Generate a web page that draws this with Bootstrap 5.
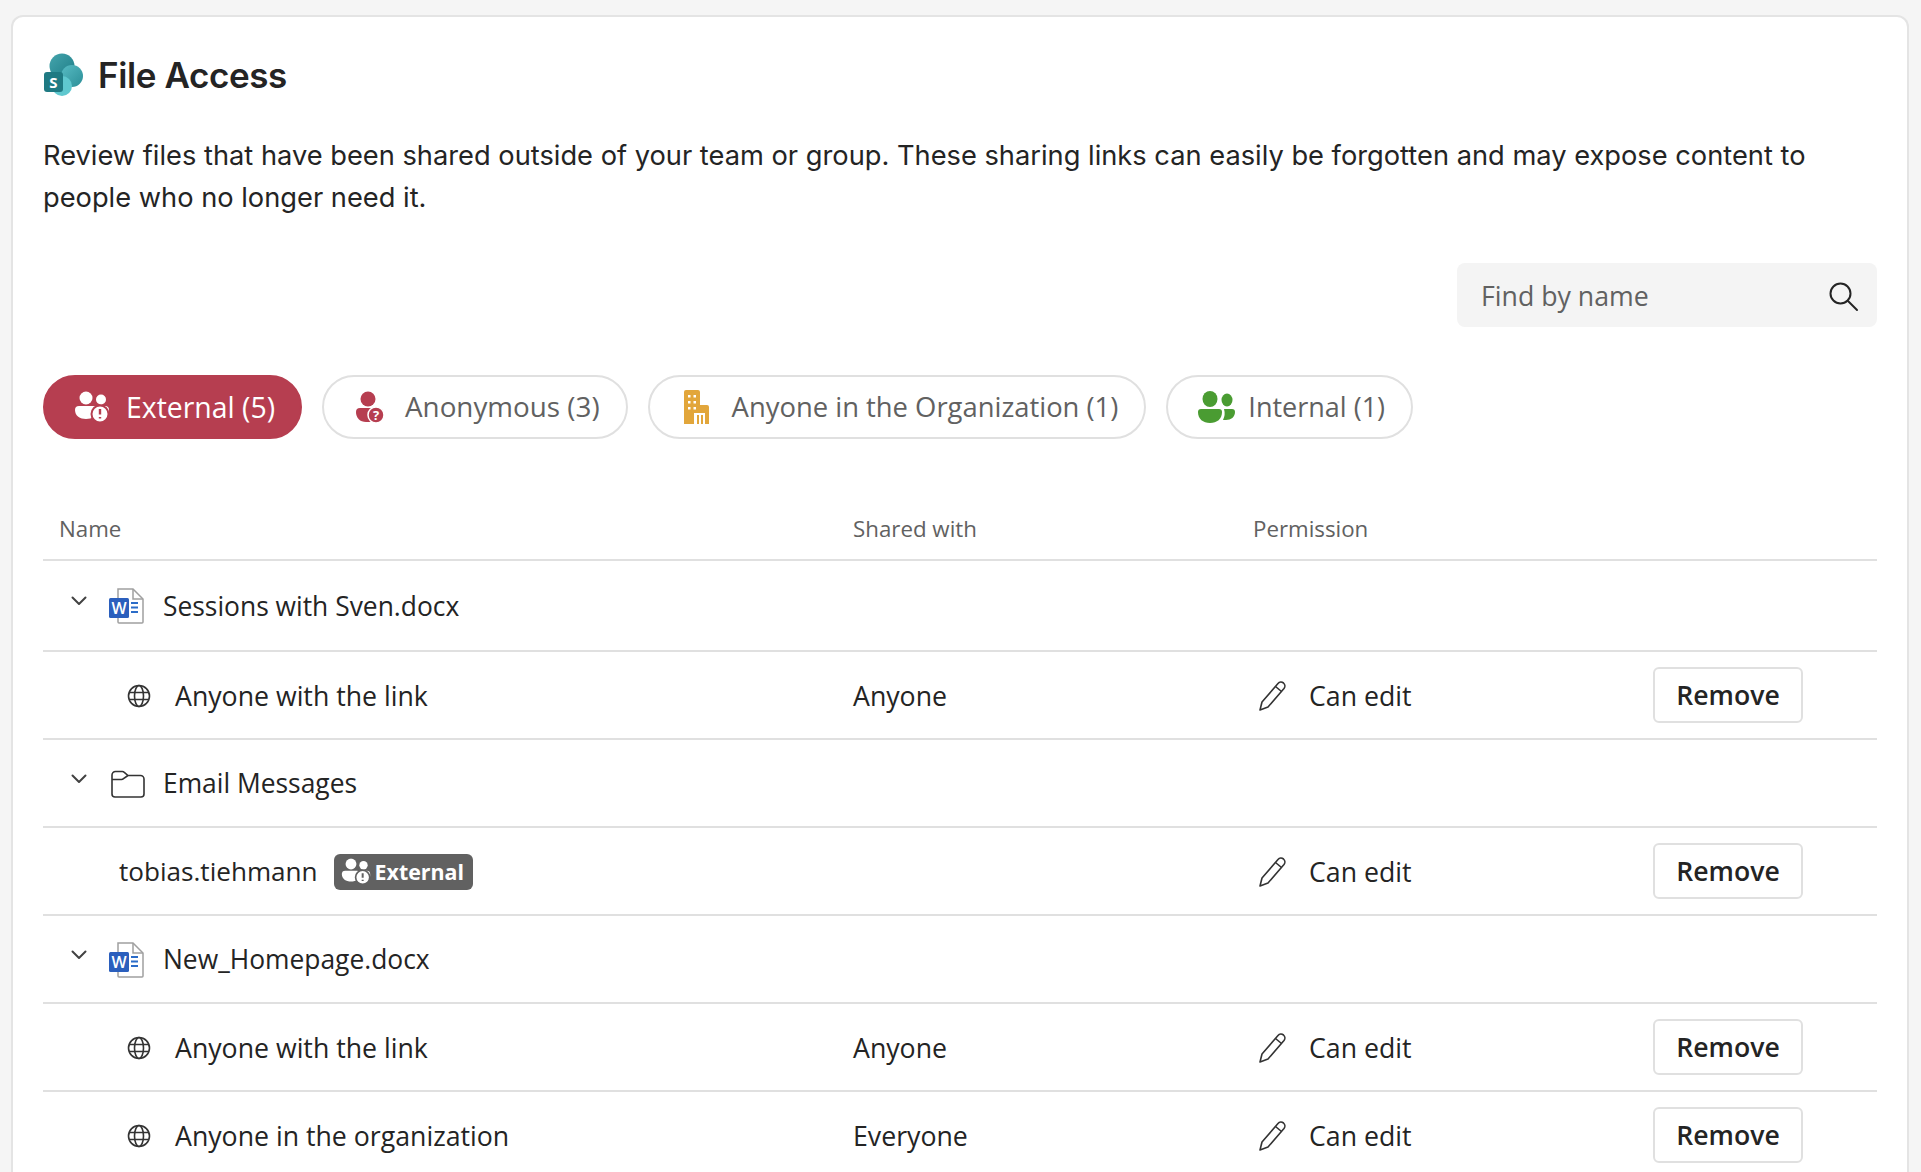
<!DOCTYPE html>
<html lang="en">
  <head>
    <meta charset="UTF-8" />
    <meta name="viewport" content="width=device-width, initial-scale=1.0" />
    <title>File Access</title>
    <link href="https://cdn.jsdelivr.net/npm/bootstrap@5.3.3/dist/css/bootstrap.min.css" rel="stylesheet" />
    <style>
      html, body { height: 100%; overflow: hidden; }
      body {
        background-color: #f5f5f5;
        color: #242424;
        font-family: "Open Sans", "Noto Sans", sans-serif;
        font-size: 26.7px;
      }
      .panel {
        margin: 17px 14px 0 13px;
        min-height: 1300px;
        padding: 36px 30px 0;
        background: #fff;
        border-radius: 10px 10px 0 0;
        box-shadow: 0 0 0 2px #e4e4e4;
      }
      .title-row { gap: 14px; padding-left: 1px; }
      .panel-title {
        font-family: Inter, sans-serif;
        font-size: 35px;
        font-weight: 600;
        margin: 0;
        letter-spacing: -0.4px;
      }
      .panel-intro {
        font-family: Inter, sans-serif;
        font-size: 27.25px;
        line-height: 42px;
        margin: 38px 0 0;
      }
      .find-box {
        width: 420px;
        height: 64px;
        padding: 2px 18px 0 24px;
        background: #f4f4f4;
        border-radius: 8px;
        margin-top: 44px;
        color: #616161;
      }
      .pill-row { margin-top: 48px; gap: 20px; }
      .scope-pill {
        height: 64px;
        padding: 0 26px 0 32px;
        border: 2px solid #e0e0e0;
        border-radius: 32px;
        background: #fff;
        color: #616161;
        font-size: 27.4px;
        gap: 18px;
      }
      .scope-pill.current { background: #b63e50; border-color: #b63e50; color: #fff; font-size: 28.4px; padding: 0 25px 0 29px; gap: 16px; }
      .scope-pill.anon { font-size: 27.8px; gap: 20px; padding-left: 31px; }
      .scope-pill.org { gap: 23px; padding-left: 33px; }
      .scope-pill.inner { font-size: 27px; gap: 13px; padding-left: 29px; }
      .access-table { margin: 59px 0 0; table-layout: fixed; width: 100%; }
      .access-table > :not(caption) > * > * {
        padding: 0;
        border-bottom: 2px solid #e0e0e0;
        color: #242424;
        vertical-align: middle;
      }
      .access-table th { font-weight: 400; font-size: 22.3px; color: #616161 !important; height: 62px; padding-left: 16px !important; }
      .access-table td { height: 88px; }
      .access-table tbody tr:first-child td { height: 91px; }
      .access-table td.shared, .access-table th.shared { padding-left: 16px !important; }
      .access-table td.shared { padding-top: 2px; }
      .access-table td.act-cell { padding-right: 74px; text-align: right; }
      .col-name { width: 794px; }
      .col-shared { width: 400px; }
      .col-act { width: 320px; }
      .file-cell { padding: 2px 0 0 28px; font-size: 26.4px; }
      .file-chevron { margin-right: 19px; margin-bottom: 10px; }
      .file-icon { width: 39px; margin-right: 18px; }
      .link-cell { gap: 24px; padding: 2px 0 0 84px; }
      .user-cell { gap: 16px; padding: 2px 0 0 76px; font-size: 26.1px; }
      .perm-cell { gap: 21px; padding: 2px 0 0 21px; }
      .chip {
        height: 36px;
        padding: 0 9px 0 7px;
        gap: 4px;
        border-radius: 6px;
        background: #616161;
        color: #fff;
        font-size: 21.4px;
        font-weight: 700;
      }
      .remove-btn {
        width: 150px;
        height: 56px;
        padding: 2px 0 0;
        border: 2px solid #e0e0e0;
        border-radius: 6px;
        background: #fff;
        color: #242424;
        font-size: 26.6px;
        font-weight: 600;
      }
      svg { flex: none; display: block; }
    </style>
  </head>
  <body>
    <!-- icons -->
    <svg width="0" height="0" class="position-absolute">
      <defs>
        <linearGradient id="spTop" x1="0" y1="0" x2="1" y2="1"><stop offset="0" stop-color="#45a5ad" /><stop offset="1" stop-color="#1d7c86" /></linearGradient>
        <linearGradient id="spMid" x1="0" y1="0" x2="1" y2="1"><stop offset="0" stop-color="#58bcc4" /><stop offset="1" stop-color="#2b8e97" /></linearGradient>
      </defs>
      <symbol id="i-people" viewBox="0 0 36 32">
        <circle cx="12" cy="7" r="6.5" fill="currentColor" />
        <circle cx="27" cy="8.5" r="5" fill="currentColor" />
        <path d="M1 19a4 4 0 0 1 4-4h14a4 4 0 0 1 4 4c0 6-5 9-11 9S1 25 1 19z" fill="currentColor" />
        <path d="M25 15h6a4 4 0 0 1 4 4v3H25z" fill="currentColor" />
      </symbol>
      <symbol id="i-chevron" viewBox="0 0 16 10"><path d="M1.5 1.5 8 8l6.5-6.5" fill="none" stroke="#424242" stroke-width="2" stroke-linecap="round" stroke-linejoin="round" /></symbol>
      <symbol id="i-folder" viewBox="0 0 34 28">
        <path d="M1 5a3.500 3.500 0 0 1 3.500-3.500h6.800a3 3 0 0 1 2 .8L17 5.500h12.500A3.500 3.500 0 0 1 33 9v15a3 3 0 0 1-3 3H4a3 3 0 0 1-3-3z M1 9.500h9.500a3 3 0 0 0 2-.8L17 5.500" fill="none" stroke="#333" stroke-width="1.600" />
      </symbol>
      <symbol id="i-globe" viewBox="0 0 24 24" fill="none" stroke="#333" stroke-width="1.600">
        <circle cx="12" cy="12" r="10.500" />
        <ellipse cx="12" cy="12" rx="4.500" ry="10.500" />
        <path d="M2 8.500h20M2 15.500h20" />
      </symbol>
      <symbol id="i-pencil" viewBox="0 0 30 32" fill="none" stroke="#333" stroke-width="1.600" stroke-linejoin="round">
        <path d="M2 30l2-8L20 3.500a4 4 0 0 1 5.500-.5 4 4 0 0 1 .5 5.500L10 27z" />
        <path d="M17.500 6.500l6 5" />
      </symbol>
    </svg>

    <div class="panel">
      <div class="title-row d-flex align-items-center">
        <svg width="40" height="44" viewBox="0 0 40 44">
          <circle cx="18" cy="13" r="12.500" fill="url(#spTop)" />
          <circle cx="28" cy="23" r="11" fill="url(#spMid)" />
          <circle cx="18" cy="33" r="10" fill="#5fc8cf" />
          <rect x="0" y="19" width="19" height="20" rx="3" fill="#1f7a83" />
          <text x="9.500" y="34.500" text-anchor="middle" font-family="Open Sans, sans-serif" font-size="15" font-weight="700" fill="#fff">S</text>
        </svg>
        <h1 class="panel-title">File Access</h1>
      </div>
      <p class="panel-intro">Review files that have been shared outside of your team or group. These sharing links can easily be forgotten and may expose content to people who no longer need it.</p>

      <div class="d-flex justify-content-end">
        <div class="find-box d-flex align-items-center justify-content-between">
          <span>Find by name</span>
          <svg width="32" height="32" viewBox="0 0 32 32" fill="none" stroke="#242424" stroke-width="2"><circle cx="13.500" cy="13.500" r="10" /><path d="M21 21l9 9" stroke-linecap="round" /></svg>
        </div>
      </div>

      <div class="pill-row d-flex">
        <div class="scope-pill current d-flex align-items-center">
          <svg width="36" height="32" viewBox="0 0 36 32"><use href="#i-people" color="#fff" /><circle cx="26" cy="23" r="8.500" fill="#fff" stroke="#b63e50" stroke-width="2" /><path d="M26 18v5.500M26 26v1.500" stroke="#b63e50" stroke-width="2.400" /></svg>
          External (5)
        </div>
        <div class="scope-pill anon d-flex align-items-center">
          <svg width="30" height="32" viewBox="0 0 30 32" fill="#b63e50"><circle cx="13" cy="8" r="7.500" /><path d="M1 21a4 4 0 0 1 4-4h13v14H11C5 31 1 27 1 21z" /><circle cx="21" cy="24" r="8" stroke="#fff" stroke-width="1.500" /><text x="21" y="29" text-anchor="middle" font-family="Open Sans, sans-serif" font-size="13" font-weight="700" fill="#fff">?</text></svg>
          Anonymous (3)
        </div>
        <div class="scope-pill org d-flex align-items-center">
          <svg width="26" height="34" viewBox="0 0 26 34"><path d="M1 2a2 2 0 0 1 2-2h12a2 2 0 0 1 2 2v13h7a2 2 0 0 1 2 2v17H1z" fill="#e2a63b" /><g fill="#fff"><rect x="5" y="5" width="2.500" height="2.500" /><rect x="10.500" y="5" width="2.500" height="2.500" /><rect x="5" y="11" width="2.500" height="2.500" /><rect x="10.500" y="11" width="2.500" height="2.500" /><rect x="5" y="17" width="2.500" height="2.500" /><rect x="10.500" y="17" width="2.500" height="2.500" /><path d="M11 23h11v11h-2v-9h-2v9h-2v-9h-2v9h-3z" /></g></svg>
          Anyone in the Organization (1)
        </div>
        <div class="scope-pill inner d-flex align-items-center">
          <svg width="38" height="32" viewBox="0 0 38 32" fill="#4a9c32"><ellipse cx="13" cy="8" rx="7.500" ry="8" /><ellipse cx="30" cy="9" rx="5.500" ry="6.500" /><path d="M1 21a3 3 0 0 1 3-3h18a3 3 0 0 1 3 3c0 7-5 11-12 11S1 28 1 21z" /><path d="M27 18h8a3 3 0 0 1 3 3c0 5-4 8-9 8h-3a15 15 0 0 0 1-11z" /></svg>
          Internal (1)
        </div>
      </div>

      <table class="table access-table">
        <colgroup><col class="col-name" /><col class="col-shared" /><col /><col class="col-act" /></colgroup>
        <thead>
          <tr><th>Name</th><th class="shared">Shared with</th><th>Permission</th><th></th></tr>
        </thead>
        <tbody id="rows"></tbody>
      </table>
    </div>

    <script src="https://cdn.jsdelivr.net/npm/bootstrap@5.3.3/dist/js/bootstrap.bundle.min.js"></script>
    <script>
      const rows = [
        { file: "Sessions with Sven.docx", icon: "word" },
        { link: "Anyone with the link", shared: "Anyone" },
        { file: "Email Messages", icon: "folder" },
        { user: "tobias.tiehmann" },
        { file: "New_Homepage.docx", icon: "word" },
        { link: "Anyone with the link", shared: "Anyone" },
        { link: "Anyone in the organization", shared: "Everyone" },
      ];
      const use = (name, w, h) => `<svg width="${w}" height="${h}"><use href="#i-${name}" /></svg>`;
      const wordIcon = `<svg width="36" height="36" viewBox="0 0 36 36">
        <path d="M9 1h15l10 10v23a1 1 0 0 1-1 1H10a1 1 0 0 1-1-1z" fill="#fff" stroke="#a0a0a0" stroke-width="1.5" />
        <path d="M24 1v10h10" fill="none" stroke="#a0a0a0" stroke-width="1.5" />
        <rect x="0" y="10" width="20" height="20" rx="1.5" fill="#2b5fbd" />
        <text x="10" y="26" text-anchor="middle" font-family="Open Sans, sans-serif" font-size="16" font-weight="600" fill="#fff">W</text>
        <path d="M22 15h7M22 19.500h7M22 24h7" stroke="#2b6cc8" stroke-width="1.800" />
      </svg>`;
      const permCells = (shared) => `
        <td class="shared">${shared || ""}</td>
        <td><div class="perm-cell d-flex align-items-center">${use("pencil", 30, 32)}Can edit</div></td>
        <td class="act-cell"><button class="btn remove-btn" type="button">Remove</button></td>`;

      document.getElementById("rows").innerHTML = rows.map((row) => {
        if (row.file) {
          const icon = row.icon === "word" ? wordIcon : use("folder", 34, 28);
          return `<tr><td colspan="4"><div class="file-cell d-flex align-items-center"><span class="file-chevron">${use("chevron", 16, 10)}</span><span class="file-icon d-flex justify-content-end">${icon}</span>${row.file}</div></td></tr>`;
        }
        if (row.user) {
          const chip = `<span class="chip d-inline-flex align-items-center"><svg width="30" height="27" viewBox="0 0 36 32"><use href="#i-people" color="#fff" /><circle cx="26" cy="23" r="8.500" fill="#fff" stroke="#616161" stroke-width="2" /><path d="M26 18v5.500M26 26v1.500" stroke="#616161" stroke-width="2.400" /></svg>External</span>`;
          return `<tr><td><div class="user-cell d-flex align-items-center">${row.user}${chip}</div></td>${permCells("")}</tr>`;
        }
        return `<tr><td><div class="link-cell d-flex align-items-center">${use("globe", 24, 24)}${row.link}</div></td>${permCells(row.shared)}</tr>`;
      }).join("");
    </script>
  </body>
</html>
